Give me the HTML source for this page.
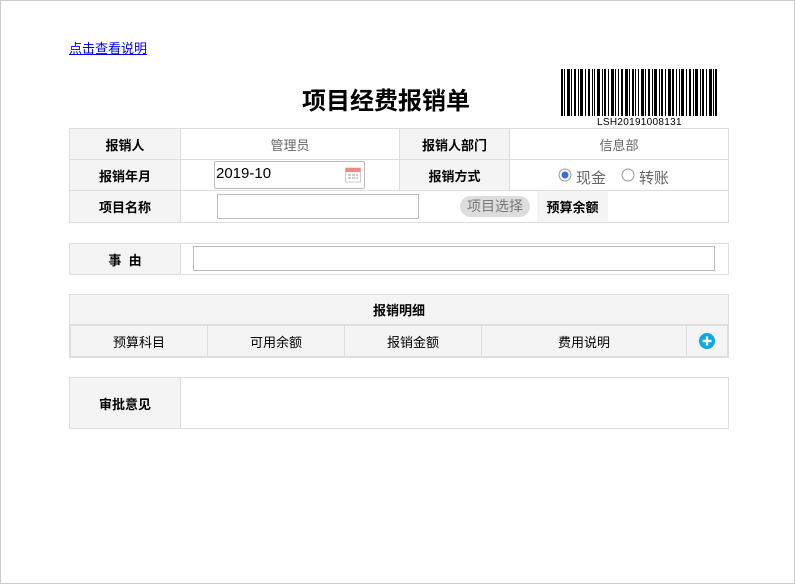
<!DOCTYPE html>
<html><head><meta charset="utf-8"><style>
*{margin:0;padding:0;box-sizing:border-box}
body{width:795px;height:584px;background:#fff;font-family:"Liberation Sans","Noto Sans CJK SC",sans-serif;font-size:13px;color:#000;position:relative;overflow:hidden}
.frame{position:absolute;left:0;top:0;width:795px;height:584px;border:1px solid #ccc}
.a{position:absolute}
.c{position:absolute;display:flex;align-items:center;justify-content:center;border:1px solid #ddd}
.g{background:#f4f4f4}
.b{font-weight:bold}
.v{color:#666}
.in{position:absolute;border:1px solid #bbb;background:#fff}
.s{position:absolute;display:flex;align-items:center;justify-content:center;background:#f4f4f4;border-right:1px solid #ddd;top:326px;height:30px}
</style></head><body>
<div class="frame"></div>
<a class="a" style="left:69px;top:38px;color:#00e;text-decoration:underline;font-size:13px">点击查看说明</a>
<div class="a b" style="left:302px;top:81px;font-size:24px;letter-spacing:0px">项目经费报销单</div>
<svg class="a" style="left:561px;top:69px" width="157" height="48" viewBox="0 0 157 48">
<g fill="#000">
<rect x="0" width="2" height="47"/><rect x="3" width="1" height="47"/><rect x="6" width="3" height="47"/><rect x="10" width="1" height="47"/><rect x="13" width="2" height="47"/><rect x="17" width="1" height="47"/><rect x="19" width="3" height="47"/><rect x="24" width="1" height="47"/><rect x="27" width="2" height="47"/><rect x="31" width="1" height="47"/><rect x="33" width="1" height="47"/><rect x="36" width="3" height="47"/><rect x="41" width="1" height="47"/><rect x="43" width="2" height="47"/><rect x="47" width="1" height="47"/><rect x="50" width="3" height="47"/><rect x="54" width="1" height="47"/><rect x="57" width="1" height="47"/><rect x="60" width="2" height="47"/><rect x="64" width="3" height="47"/><rect x="68" width="1" height="47"/><rect x="71" width="2" height="47"/><rect x="74" width="1" height="47"/><rect x="77" width="1" height="47"/><rect x="80" width="3" height="47"/><rect x="84" width="1" height="47"/><rect x="87" width="2" height="47"/><rect x="91" width="1" height="47"/><rect x="93" width="3" height="47"/><rect x="98" width="1" height="47"/><rect x="100" width="2" height="47"/><rect x="104" width="1" height="47"/><rect x="107" width="3" height="47"/><rect x="111" width="2" height="47"/><rect x="115" width="1" height="47"/><rect x="118" width="1" height="47"/><rect x="120" width="3" height="47"/><rect x="125" width="1" height="47"/><rect x="128" width="2" height="47"/><rect x="132" width="1" height="47"/><rect x="134" width="3" height="47"/><rect x="139" width="1" height="47"/><rect x="141" width="2" height="47"/><rect x="145" width="1" height="47"/><rect x="148" width="3" height="47"/><rect x="152" width="1" height="47"/><rect x="154" width="2" height="47"/>
</g></svg>
<div class="a" style="left:597px;top:117px;font-size:10px;font-family:'Liberation Sans',sans-serif;letter-spacing:0.3px">LSH20191008131</div>

<div class="c g b" style="left:69px;top:128px;width:112px;height:32px">报销人</div>
<div class="c v" style="left:180px;top:128px;width:220px;height:32px">管理员</div>
<div class="c g b" style="left:399px;top:128px;width:111px;height:32px">报销人部门</div>
<div class="c v" style="left:509px;top:128px;width:220px;height:32px">信息部</div>

<div class="c g b" style="left:69px;top:159px;width:112px;height:32px">报销年月</div>
<div class="c" style="left:180px;top:159px;width:220px;height:32px"></div>
<div class="in" style="left:214px;top:161px;width:151px;height:28px;border-radius:2px;font-size:15px;padding:3px 0 0 1px">2019-10</div>
<svg class="a" style="left:345px;top:166px" width="16" height="17" viewBox="0 0 16 17"><rect x="0.5" y="2" width="15" height="14" fill="#fff" stroke="#ccc"/><rect x="0.5" y="2" width="15" height="4" fill="#f08a80"/><g fill="#ccc"><rect x="3" y="8" width="3" height="2"/><rect x="7" y="8" width="3" height="2"/><rect x="11" y="8" width="2" height="2"/><rect x="3" y="11" width="3" height="2"/><rect x="7" y="11" width="3" height="2"/><rect x="11" y="11" width="2" height="2"/></g></svg>
<div class="c g b" style="left:399px;top:159px;width:111px;height:32px">报销方式</div>
<div class="c" style="left:509px;top:159px;width:220px;height:32px"></div>
<svg class="a" style="left:558px;top:168px" width="14" height="14"><circle cx="7" cy="7" r="6" fill="#fff" stroke="#999"/><circle cx="7" cy="7" r="3.5" fill="#3a6fd1"/></svg>
<div class="a v" style="left:576px;top:167px;font-size:15px">现金</div>
<svg class="a" style="left:621px;top:168px" width="14" height="14"><circle cx="7" cy="7" r="6" fill="#fff" stroke="#999"/></svg>
<div class="a v" style="left:639px;top:167px;font-size:15px">转账</div>

<div class="c g b" style="left:69px;top:190px;width:112px;height:33px">项目名称</div>
<div class="c" style="left:180px;top:190px;width:549px;height:33px"></div>
<div class="in" style="left:217px;top:194px;width:202px;height:25px"></div>
<div class="a" style="left:460px;top:196px;width:70px;height:21px;background:#ddd;border-radius:11px;color:#777;font-size:14px;text-align:center;line-height:21px">项目选择</div>
<div class="a g b" style="left:537px;top:191px;width:71px;height:31px;display:flex;align-items:center;justify-content:center">预算余额</div>

<div class="c g b" style="left:69px;top:243px;width:112px;height:32px">事&nbsp;&nbsp;由</div>
<div class="c" style="left:180px;top:243px;width:549px;height:32px"></div>
<div class="in" style="left:193px;top:246px;width:522px;height:25px"></div>

<div class="a" style="left:69px;top:294px;width:660px;height:64px;border:1px solid #ddd;background:#f4f4f4"></div>
<div class="a b" style="left:69px;top:294px;width:660px;height:31px;display:flex;align-items:center;justify-content:center">报销明细</div>
<div class="a" style="left:69px;top:324px;width:660px;height:34px;border:2px solid #ddd;background:#f4f4f4"></div>
<div class="s" style="left:71px;width:137px">预算科目</div>
<div class="s" style="left:208px;width:137px">可用余额</div>
<div class="s" style="left:345px;width:137px">报销金额</div>
<div class="s" style="left:482px;width:205px">费用说明</div>
<svg class="a" style="left:699px;top:333px" width="16" height="16"><circle cx="8" cy="8" r="8" fill="#0aa6e6"/><rect x="3.5" y="6.8" width="9" height="2.4" fill="#fff"/><rect x="6.8" y="3.5" width="2.4" height="9" fill="#fff"/></svg>

<div class="c g b" style="left:69px;top:377px;width:112px;height:52px">审批意见</div>
<div class="c" style="left:180px;top:377px;width:549px;height:52px"></div>
</body></html>
